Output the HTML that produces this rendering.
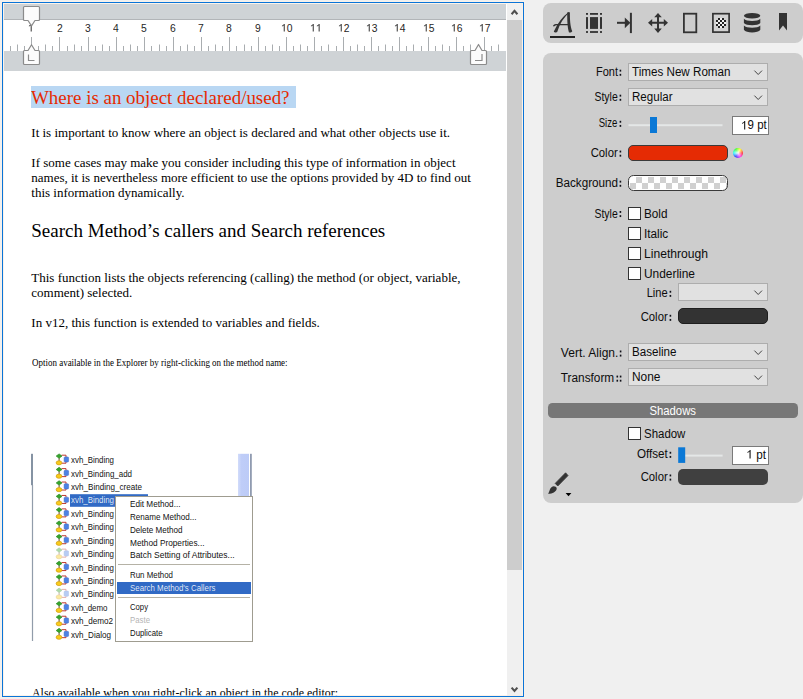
<!DOCTYPE html>
<html><head><meta charset="utf-8">
<style>
html,body{margin:0;padding:0;}
body{width:803px;height:699px;background:#f0f0f0;position:relative;overflow:hidden;font-family:"Liberation Sans",sans-serif;}
.abs{position:absolute;}
.t{position:absolute;white-space:pre;line-height:1;z-index:6;}
.combo{position:absolute;background:#e1e1e1;border:1px solid #adadad;}
#docbg{position:absolute;left:3px;top:3px;width:520px;height:693px;background:#fff;}
#docborder{position:absolute;left:2px;top:2px;width:520px;height:693px;border:1px solid #0a74d8;z-index:10;box-shadow:inset 0 0 0 1px rgba(250,235,220,0.6),0 0 0 1px #f7f1eb;}
#clip{position:absolute;left:0;top:0;width:523px;height:696px;overflow:hidden;}
</style></head><body>
<div id="docbg"></div>
<div id="clip">
<div class="abs" style="left:4px;top:4px;width:502px;height:15px;background:#cfd3d6;border-bottom:1px solid #b2b5b8;"></div>
<div class="abs" style="left:4px;top:51px;width:502px;height:19.5px;background:#cfd3d6;"></div>
<svg class="abs" style="left:0;top:0;z-index:7" width="524" height="72" viewBox="0 0 524 72"><path d="M10.5 46V51M17.5 44.5V51M24.5 46V51M31.5 37V51M38.5 46V51M45.5 44.5V51M52.5 46V51M59.5 37V51M67.5 46V51M74.5 44.5V51M81.5 46V51M88.5 37V51M95.5 46V51M102.5 44.5V51M109.5 46V51M116.5 37V51M123.5 46V51M130.5 44.5V51M137.5 46V51M144.5 37V51M151.5 46V51M159.5 44.5V51M166.5 46V51M173.5 37V51M180.5 46V51M187.5 44.5V51M194.5 46V51M201.5 37V51M208.5 46V51M215.5 44.5V51M222.5 46V51M229.5 37V51M236.5 46V51M244.5 44.5V51M251.5 46V51M258.5 37V51M265.5 46V51M272.5 44.5V51M279.5 46V51M286.5 37V51M293.5 46V51M300.5 44.5V51M307.5 46V51M314.5 37V51M321.5 46V51M328.5 44.5V51M336.5 46V51M343.5 37V51M350.5 46V51M357.5 44.5V51M364.5 46V51M371.5 37V51M378.5 46V51M385.5 44.5V51M392.5 46V51M399.5 37V51M406.5 46V51M413.5 44.5V51M421.5 46V51M428.5 37V51M435.5 46V51M442.5 44.5V51M449.5 46V51M456.5 37V51M463.5 46V51M470.5 44.5V51M477.5 46V51M484.5 37V51M491.5 46V51M498.5 44.5V51" stroke="#a9adb0" stroke-width="1" fill="none"/><path d="M24.5 6.5H38.5Q39.5 6.5 39.5 7.5V19.5Q39.5 20.5 38.5 20.5H35L31.5 25.8L28 20.5H24.5Q23.5 20.5 23.5 19.5V7.5Q23.5 6.5 24.5 6.5Z" fill="#fcfcfc" stroke="#8b8b8b" stroke-width="1.2" stroke-linejoin="round"/><path d="M24.5 50.5H28L31.5 44.7L35 50.5H38.5Q39.5 50.5 39.5 51.5V63.5Q39.5 64.5 38.5 64.5H24.5Q23.5 64.5 23.5 63.5V51.5Q23.5 50.5 24.5 50.5Z" fill="#fcfcfc" stroke="#8b8b8b" stroke-width="1.2" stroke-linejoin="round"/><path d="M28.5 54.5V60.5H34.5" fill="none" stroke="#8b8b8b" stroke-width="1.2"/><path d="M471.5 50.5H475L478.5 44.5L482 50.5H485.5Q486.5 50.5 486.5 51.5V63.5Q486.5 64.5 485.5 64.5H471.5Q470.5 64.5 470.5 63.5V51.5Q470.5 50.5 471.5 50.5Z" fill="#fcfcfc" stroke="#8b8b8b" stroke-width="1.2" stroke-linejoin="round"/><path d="M475 60.5H482V54" fill="none" stroke="#8b8b8b" stroke-width="1.2"/></svg>
<!-- scrollbar -->
<div class="abs" style="left:507px;top:4px;width:15px;height:692px;background:#f0f0f0;"></div>
<div class="abs" style="left:507px;top:20px;width:15px;height:549.5px;background:#cdcdcd;"></div>
<svg class="abs" style="left:506px;top:4px" width="17" height="692" viewBox="506 4 17 692"><path d="M511.6 14.2L514.5 10.9L517.4 14.2" fill="none" stroke="#505050" stroke-width="2.1"/><path d="M511.6 687.6L514.5 690.9L517.4 687.6" fill="none" stroke="#505050" stroke-width="2.1"/></svg>
<!-- title selection -->
<div class="abs" style="left:31px;top:86px;width:265px;height:21.5px;background:#b9d7f3;"></div>
<div class="t" style="left:31.30px;top:87.69px;font-size:19px;font-family:'Liberation Serif',serif;color:#e62a00;transform:scaleX(0.9960);transform-origin:0 0;">Where is an object declared/used?</div>
<div class="t" style="left:31.30px;top:126.11px;font-size:13px;font-family:'Liberation Serif',serif;color:#000;">It is important to know where an object is declared and what other objects use it.</div>
<div class="t" style="left:31.30px;top:156.11px;font-size:13px;font-family:'Liberation Serif',serif;color:#000;">If some cases may make you consider including this type of information in object</div>
<div class="t" style="left:31.30px;top:171.11px;font-size:13px;font-family:'Liberation Serif',serif;color:#000;">names, it is nevertheless more efficient to use the options provided by 4D to find out</div>
<div class="t" style="left:31.30px;top:186.11px;font-size:13px;font-family:'Liberation Serif',serif;color:#000;">this information dynamically.</div>
<div class="t" style="left:31.30px;top:220.79px;font-size:19px;font-family:'Liberation Serif',serif;color:#000;">Search Method’s callers and Search references</div>
<div class="t" style="left:31.30px;top:271.11px;font-size:13px;font-family:'Liberation Serif',serif;color:#000;">This function lists the objects referencing (calling) the method (or object, variable,</div>
<div class="t" style="left:31.30px;top:286.11px;font-size:13px;font-family:'Liberation Serif',serif;color:#000;">comment) selected.</div>
<div class="t" style="left:31.30px;top:316.11px;font-size:13px;font-family:'Liberation Serif',serif;color:#000;">In v12, this function is extended to variables and fields.</div>
<div class="t" style="left:31.70px;top:359.21px;font-size:9.3px;font-family:'Liberation Serif',serif;color:#000;transform:scaleX(0.9649);transform-origin:0 0;">Option available in the Explorer by right-clicking on the method name:</div>
<div class="t" style="left:31.70px;top:686.65px;font-size:12px;font-family:'Liberation Serif',serif;color:#000;transform:scaleX(0.9916);transform-origin:0 0;">Also available when you right-click an object in the code editor:</div>
<div class="t" style="left:28.18px;top:22.91px;font-size:10.5px;color:#262626;transform:scaleX(0.9850);transform-origin:50% 0;"><svg style="width:0.556em;height:0.716em;display:inline-block;vertical-align:baseline;overflow:visible" viewBox="0 0 556 716"><path fill="currentColor" d="M258 716H350V0H276C246 76 176 128 84 158V240C154 220 219 180 258 130Z"/></svg></div>
<div class="t" style="left:56.50px;top:22.91px;font-size:10.5px;color:#262626;transform:scaleX(0.9850);transform-origin:50% 0;">2</div>
<div class="t" style="left:84.82px;top:22.91px;font-size:10.5px;color:#262626;transform:scaleX(0.9850);transform-origin:50% 0;">3</div>
<div class="t" style="left:113.14px;top:22.91px;font-size:10.5px;color:#262626;transform:scaleX(0.9850);transform-origin:50% 0;">4</div>
<div class="t" style="left:141.46px;top:22.91px;font-size:10.5px;color:#262626;transform:scaleX(0.9850);transform-origin:50% 0;">5</div>
<div class="t" style="left:169.78px;top:22.91px;font-size:10.5px;color:#262626;transform:scaleX(0.9850);transform-origin:50% 0;">6</div>
<div class="t" style="left:198.10px;top:22.91px;font-size:10.5px;color:#262626;transform:scaleX(0.9850);transform-origin:50% 0;">7</div>
<div class="t" style="left:226.42px;top:22.91px;font-size:10.5px;color:#262626;transform:scaleX(0.9850);transform-origin:50% 0;">8</div>
<div class="t" style="left:254.74px;top:22.91px;font-size:10.5px;color:#262626;transform:scaleX(0.9850);transform-origin:50% 0;">9</div>
<div class="t" style="left:281.14px;top:22.91px;font-size:10.5px;color:#262626;transform:scaleX(0.9850);transform-origin:50% 0;"><svg style="width:0.556em;height:0.716em;display:inline-block;vertical-align:baseline;overflow:visible" viewBox="0 0 556 716"><path fill="currentColor" d="M258 716H350V0H276C246 76 176 128 84 158V240C154 220 219 180 258 130Z"/></svg>0</div>
<div class="t" style="left:309.85px;top:22.91px;font-size:10.5px;color:#262626;transform:scaleX(0.9850);transform-origin:50% 0;"><svg style="width:0.556em;height:0.716em;display:inline-block;vertical-align:baseline;overflow:visible" viewBox="0 0 556 716"><path fill="currentColor" d="M258 716H350V0H276C246 76 176 128 84 158V240C154 220 219 180 258 130Z"/></svg><svg style="width:0.556em;height:0.716em;display:inline-block;vertical-align:baseline;overflow:visible" viewBox="0 0 556 716"><path fill="currentColor" d="M258 716H350V0H276C246 76 176 128 84 158V240C154 220 219 180 258 130Z"/></svg></div>
<div class="t" style="left:337.78px;top:22.91px;font-size:10.5px;color:#262626;transform:scaleX(0.9850);transform-origin:50% 0;"><svg style="width:0.556em;height:0.716em;display:inline-block;vertical-align:baseline;overflow:visible" viewBox="0 0 556 716"><path fill="currentColor" d="M258 716H350V0H276C246 76 176 128 84 158V240C154 220 219 180 258 130Z"/></svg>2</div>
<div class="t" style="left:366.10px;top:22.91px;font-size:10.5px;color:#262626;transform:scaleX(0.9850);transform-origin:50% 0;"><svg style="width:0.556em;height:0.716em;display:inline-block;vertical-align:baseline;overflow:visible" viewBox="0 0 556 716"><path fill="currentColor" d="M258 716H350V0H276C246 76 176 128 84 158V240C154 220 219 180 258 130Z"/></svg>3</div>
<div class="t" style="left:394.42px;top:22.91px;font-size:10.5px;color:#262626;transform:scaleX(0.9850);transform-origin:50% 0;"><svg style="width:0.556em;height:0.716em;display:inline-block;vertical-align:baseline;overflow:visible" viewBox="0 0 556 716"><path fill="currentColor" d="M258 716H350V0H276C246 76 176 128 84 158V240C154 220 219 180 258 130Z"/></svg>4</div>
<div class="t" style="left:422.74px;top:22.91px;font-size:10.5px;color:#262626;transform:scaleX(0.9850);transform-origin:50% 0;"><svg style="width:0.556em;height:0.716em;display:inline-block;vertical-align:baseline;overflow:visible" viewBox="0 0 556 716"><path fill="currentColor" d="M258 716H350V0H276C246 76 176 128 84 158V240C154 220 219 180 258 130Z"/></svg>5</div>
<div class="t" style="left:451.06px;top:22.91px;font-size:10.5px;color:#262626;transform:scaleX(0.9850);transform-origin:50% 0;"><svg style="width:0.556em;height:0.716em;display:inline-block;vertical-align:baseline;overflow:visible" viewBox="0 0 556 716"><path fill="currentColor" d="M258 716H350V0H276C246 76 176 128 84 158V240C154 220 219 180 258 130Z"/></svg>6</div>
<div class="t" style="left:479.38px;top:22.91px;font-size:10.5px;color:#262626;transform:scaleX(0.9850);transform-origin:50% 0;"><svg style="width:0.556em;height:0.716em;display:inline-block;vertical-align:baseline;overflow:visible" viewBox="0 0 556 716"><path fill="currentColor" d="M258 716H350V0H276C246 76 176 128 84 158V240C154 220 219 180 258 130Z"/></svg>7</div>
</div>
<div id="docborder"></div>
<div class="abs" style="left:543px;top:3px;width:260px;height:40px;background:#cdcdcd;border-radius:8px;"></div>
<div class="abs" style="left:543px;top:53px;width:260px;height:449.6px;background:#cdcdcd;border-radius:8px;"></div>
<svg class="abs" style="left:0;top:0" width="803" height="50" viewBox="0 0 803 50"><path d="M568.5 12.3Q559.8 18.6 553.8 31.4C554.3 32.6 556.4 32.8 557.2 32Q560.9 19.8 569.4 12.6Z" fill="#333"/><path d="M567.2 12.6C568 12.2 569.2 12.2 569.9 12.4C569.8 19 570.2 26.5 572.3 31.2C571.6 32.3 570 32.7 568.9 32.2C567.3 27 567.2 19 567.2 12.6Z" fill="#333"/><path d="M553 25.6C553.6 24.3 555.2 23.9 557.5 23.9H568.6V25.3H557.8C556 25.3 554.8 25.6 553.9 26.7Z" fill="#333"/><rect x="550" y="36" width="25" height="2" fill="#222"/><rect x="590" y="17.1" width="8" height="11.8" fill="#333"/><rect x="586" y="13" width="2" height="1.8" fill="#333"/><rect x="590" y="13" width="8" height="1.8" fill="#333"/><rect x="600" y="13" width="2" height="1.8" fill="#333"/><rect x="586" y="17.1" width="2" height="11.8" fill="#333"/><rect x="600" y="17.1" width="2" height="11.8" fill="#333"/><rect x="586" y="31.1" width="2" height="1.8" fill="#333"/><rect x="590" y="31.1" width="8" height="1.8" fill="#333"/><rect x="600" y="31.1" width="2" height="1.8" fill="#333"/><rect x="617" y="21.8" width="10" height="2" fill="#333"/><path d="M624.8 17.4L630.4 22.8L624.8 28.2Z" fill="#333"/><rect x="629.9" y="12.8" width="2" height="20.3" fill="#333"/><path d="M658 13L661.8 17.2H659V21.8H663.8V19L668 22.8L663.8 26.6V23.8H659V28.6H661.8L658 33L654.2 28.6H657V23.8H652.2V26.6L648 22.8L652.2 19V21.8H657V17.2H654.2Z" fill="#333"/><rect x="683.9" y="13.7" width="12.4" height="18.6" fill="none" stroke="#333" stroke-width="1.8"/><rect x="712.9" y="13.7" width="16.2" height="18.4" fill="#d2d2d2" stroke="#333" stroke-width="1.7"/><path d="M720 18h2v2h-2zM718 20h2v2h-2zM722 20h2v2h-2zM716 22h2v2h-2zM720 22h2v2h-2zM724 22h2v2h-2zM718 24h2v2h-2zM722 24h2v2h-2zM720 26h2v2h-2z" fill="#f2f2f2"/><path d="M718 18h2v2h-2zM722 18h2v2h-2zM716 20h2v2h-2zM720 20h2v2h-2zM724 20h2v2h-2zM718 22h2v2h-2zM722 22h2v2h-2zM716 24h2v2h-2zM720 24h2v2h-2zM724 24h2v2h-2zM718 26h2v2h-2zM722 26h2v2h-2z" fill="#222"/><ellipse cx="752.1" cy="15.8" rx="8.2" ry="2.8" fill="#333"/><path d="M743.9 18.7C746 21.7 758.2 21.7 760.3 18.7V22.9C758.2 25.9 746 25.9 743.9 22.9Z" fill="#333"/><path d="M743.9 25.5C746 28.5 758.2 28.5 760.3 25.5V29.7C758.2 33.4 746 33.4 743.9 29.7Z" fill="#333"/><path d="M779 13H787V30.4L783 25.6L779 30.4Z" fill="#333"/></svg>
<div class="combo" style="left:628px;top:63px;width:138px;height:16px"></div>
<div class="combo" style="left:628px;top:88px;width:138px;height:16px"></div>
<div class="combo" style="left:678px;top:283px;width:88px;height:16px"></div>
<div class="combo" style="left:628px;top:343px;width:138px;height:16px"></div>
<div class="combo" style="left:628px;top:368px;width:138px;height:16px"></div>
<svg class="abs" style="left:0;top:0;z-index:4" width="803" height="699" viewBox="0 0 803 699"><path d="M754.4000000000001 70.6L758.2 74.5L762.0 70.6" fill="none" stroke="#444" stroke-width="1"/><path d="M754.4000000000001 95.6L758.2 99.5L762.0 95.6" fill="none" stroke="#444" stroke-width="1"/><path d="M754.4000000000001 290.6L758.2 294.5L762.0 290.6" fill="none" stroke="#444" stroke-width="1"/><path d="M754.4000000000001 350.6L758.2 354.5L762.0 350.6" fill="none" stroke="#444" stroke-width="1"/><path d="M754.4000000000001 375.6L758.2 379.5L762.0 375.6" fill="none" stroke="#444" stroke-width="1"/><rect x="628.5" y="124.2" width="94" height="2" fill="#e4e7e7"/><rect x="650" y="117" width="7" height="16" fill="#0a78d6"/><rect x="685" y="454.6" width="37.6" height="2" fill="#e4e7e7"/><rect x="678.2" y="447.3" width="7" height="15.6" fill="#0a78d6"/><rect x="619.60" y="69.70" width="1.6" height="1.9" fill="#101018"/><rect x="619.60" y="73.85" width="1.6" height="1.9" fill="#101018"/><rect x="619.60" y="94.70" width="1.6" height="1.9" fill="#101018"/><rect x="619.60" y="98.85" width="1.6" height="1.9" fill="#101018"/><rect x="619.60" y="120.80" width="1.6" height="1.9" fill="#101018"/><rect x="619.60" y="124.95" width="1.6" height="1.9" fill="#101018"/><rect x="619.60" y="150.60" width="1.6" height="1.9" fill="#101018"/><rect x="619.60" y="154.75" width="1.6" height="1.9" fill="#101018"/><rect x="619.60" y="180.70" width="1.6" height="1.9" fill="#101018"/><rect x="619.60" y="184.85" width="1.6" height="1.9" fill="#101018"/><rect x="619.60" y="211.00" width="1.6" height="1.9" fill="#101018"/><rect x="619.60" y="215.15" width="1.6" height="1.9" fill="#101018"/><rect x="669.60" y="290.80" width="1.6" height="1.9" fill="#101018"/><rect x="669.60" y="294.95" width="1.6" height="1.9" fill="#101018"/><rect x="669.60" y="314.80" width="1.6" height="1.9" fill="#101018"/><rect x="669.60" y="318.95" width="1.6" height="1.9" fill="#101018"/><rect x="619.80" y="350.50" width="1.6" height="1.9" fill="#101018"/><rect x="619.80" y="354.65" width="1.6" height="1.9" fill="#101018"/><rect x="619.80" y="375.60" width="1.6" height="1.9" fill="#101018"/><rect x="619.80" y="379.75" width="1.6" height="1.9" fill="#101018"/><rect x="616.50" y="375.60" width="1.6" height="1.9" fill="#101018"/><rect x="616.50" y="379.75" width="1.6" height="1.9" fill="#101018"/><rect x="669.60" y="451.80" width="1.6" height="1.9" fill="#101018"/><rect x="669.60" y="455.95" width="1.6" height="1.9" fill="#101018"/><rect x="669.60" y="474.50" width="1.6" height="1.9" fill="#101018"/><rect x="669.60" y="478.65" width="1.6" height="1.9" fill="#101018"/><path d="M565.6 472.8L568 475.6L557.8 486L555.2 483.4Z" fill="#333" stroke="#333" stroke-width="0.8" stroke-linejoin="round"/><path d="M548 493.8C548.9 492.8 549.2 491.2 549.8 489.7C550.6 487.6 552.2 486.3 553.8 486.3C555.2 486.3 556.4 487 556.7 488.2C557 489.6 555.6 491.4 553.8 492.4C552.4 493.2 550.6 493.8 548 493.8Z" fill="#333"/><path d="M565.6 493H571.4L568.5 496.2Z" fill="#000"/></svg>
<div class="abs" style="left:732px;top:116px;width:35px;height:17px;background:#fff;border:1px solid #7a7a7a;"></div>
<div class="abs" style="left:732px;top:446px;width:35px;height:17px;background:#fff;border:1px solid #7a7a7a;"></div>
<div class="abs" style="left:628px;top:145px;width:98px;height:14px;background:#e52b04;border:1px solid #3a3a3a;border-radius:5px;"></div>
<div class="abs" style="left:732.7px;top:147.7px;width:10.4px;height:10.4px;border-radius:50%;background:radial-gradient(circle,rgba(255,255,255,0.95) 0%,rgba(255,255,255,0.5) 35%,rgba(255,255,255,0) 75%),conic-gradient(from 90deg,#ff2020,#ff20ff,#2020ff,#20ffff,#20ff20,#ffff20,#ff2020);"></div>
<svg class="abs" style="left:628px;top:175px" width="100" height="16" viewBox="628 175 100 16"><defs><clipPath id="ck"><rect x="628.5" y="175.5" width="99" height="15" rx="5"/></clipPath></defs><rect x="628.5" y="175.5" width="99" height="15" rx="5" fill="#fff"/><g clip-path="url(#ck)"><rect x="636" y="177" width="6" height="6" fill="#d0d0d0"/><rect x="648" y="177" width="6" height="6" fill="#d0d0d0"/><rect x="660" y="177" width="6" height="6" fill="#d0d0d0"/><rect x="672" y="177" width="6" height="6" fill="#d0d0d0"/><rect x="684" y="177" width="6" height="6" fill="#d0d0d0"/><rect x="696" y="177" width="6" height="6" fill="#d0d0d0"/><rect x="708" y="177" width="6" height="6" fill="#d0d0d0"/><rect x="720" y="177" width="6" height="6" fill="#d0d0d0"/><rect x="630" y="183" width="6" height="6" fill="#d0d0d0"/><rect x="642" y="183" width="6" height="6" fill="#d0d0d0"/><rect x="654" y="183" width="6" height="6" fill="#d0d0d0"/><rect x="666" y="183" width="6" height="6" fill="#d0d0d0"/><rect x="678" y="183" width="6" height="6" fill="#d0d0d0"/><rect x="690" y="183" width="6" height="6" fill="#d0d0d0"/><rect x="702" y="183" width="6" height="6" fill="#d0d0d0"/><rect x="714" y="183" width="6" height="6" fill="#d0d0d0"/><rect x="726" y="183" width="6" height="6" fill="#d0d0d0"/></g><rect x="628.5" y="175.5" width="99" height="15" rx="5" fill="none" stroke="#3a3a3a" stroke-width="1"/></svg>
<div class="abs" style="left:678px;top:308px;width:88px;height:14px;background:#333;border:1px solid #1e1e1e;border-radius:5px;"></div>
<div class="abs" style="left:678px;top:469px;width:90px;height:16px;background:#404040;border-radius:5px;"></div>
<div class="abs" style="left:628px;top:207px;width:11px;height:11px;background:#fff;border:1px solid #333;"></div>
<div class="abs" style="left:628px;top:227px;width:11px;height:11px;background:#fff;border:1px solid #333;"></div>
<div class="abs" style="left:628px;top:247px;width:11px;height:11px;background:#fff;border:1px solid #333;"></div>
<div class="abs" style="left:628px;top:267px;width:11px;height:11px;background:#fff;border:1px solid #333;"></div>
<div class="abs" style="left:628px;top:427px;width:11px;height:11px;background:#fff;border:1px solid #333;"></div>
<div class="abs" style="left:548px;top:403px;width:250px;height:15px;background:#777;border-radius:4.5px;"></div>
<div class="t" style="left:593.68px;top:66.24px;font-size:12px;color:#0c0c0c;transform:scaleX(0.9161);transform-origin:100% 0;">Font</div>
<div class="t" style="left:591.01px;top:91.24px;font-size:12px;color:#0c0c0c;transform:scaleX(0.8693);transform-origin:100% 0;">Style</div>
<div class="t" style="left:594.36px;top:117.34px;font-size:12px;color:#0c0c0c;transform:scaleX(0.7968);transform-origin:100% 0;">Size</div>
<div class="t" style="left:589.01px;top:147.14px;font-size:12px;color:#0c0c0c;transform:scaleX(0.9412);transform-origin:100% 0;">Color</div>
<div class="t" style="left:553.65px;top:177.24px;font-size:12px;color:#0c0c0c;transform:scaleX(0.9743);transform-origin:100% 0;">Background</div>
<div class="t" style="left:591.01px;top:207.54px;font-size:12px;color:#0c0c0c;transform:scaleX(0.8693);transform-origin:100% 0;">Style</div>
<div class="t" style="left:632.20px;top:66.24px;font-size:12px;color:#0c0c0c;transform:scaleX(0.9697);transform-origin:0 0;">Times New Roman</div>
<div class="t" style="left:632.20px;top:91.24px;font-size:12px;color:#0c0c0c;transform:scaleX(0.9636);transform-origin:0 0;">Regular</div>
<div class="t" style="left:739.70px;top:119.34px;font-size:12px;color:#0c0c0c;transform:scaleX(0.9549);transform-origin:100% 0;"><svg style="width:0.556em;height:0.716em;display:inline-block;vertical-align:baseline;overflow:visible" viewBox="0 0 556 716"><path fill="currentColor" d="M258 716H350V0H276C246 76 176 128 84 158V240C154 220 219 180 258 130Z"/></svg>9 pt</div>
<div class="t" style="left:644.40px;top:208.24px;font-size:12px;color:#0c0c0c;transform:scaleX(0.9779);transform-origin:0 0;">Bold</div>
<div class="t" style="left:644.40px;top:228.24px;font-size:12px;color:#0c0c0c;transform:scaleX(0.9803);transform-origin:0 0;">Italic</div>
<div class="t" style="left:644.40px;top:248.24px;font-size:12px;color:#0c0c0c;transform:scaleX(1.0096);transform-origin:0 0;">Linethrough</div>
<div class="t" style="left:644.40px;top:268.24px;font-size:12px;color:#0c0c0c;transform:scaleX(0.9927);transform-origin:0 0;">Underline</div>
<div class="t" style="left:645.01px;top:287.34px;font-size:12px;color:#0c0c0c;transform:scaleX(0.9256);transform-origin:100% 0;">Line</div>
<div class="t" style="left:639.01px;top:311.34px;font-size:12px;color:#0c0c0c;transform:scaleX(0.9412);transform-origin:100% 0;">Color</div>
<div class="t" style="left:560.52px;top:347.04px;font-size:12px;color:#0c0c0c;transform:scaleX(1.0022);transform-origin:100% 0;">Vert. Align.</div>
<div class="t" style="left:560.37px;top:372.14px;font-size:12px;color:#0c0c0c;transform:scaleX(0.9865);transform-origin:100% 0;">Transform</div>
<div class="t" style="left:632.20px;top:346.24px;font-size:12px;color:#0c0c0c;transform:scaleX(0.9667);transform-origin:0 0;">Baseline</div>
<div class="t" style="left:632.20px;top:371.24px;font-size:12px;color:#0c0c0c;transform:scaleX(0.9935);transform-origin:0 0;">None</div>
<div class="t" style="left:648.31px;top:405.24px;font-size:12px;color:#fff;transform:scaleX(0.9438);transform-origin:50% 0;">Shadows</div>
<div class="t" style="left:644.40px;top:428.24px;font-size:12px;color:#0c0c0c;transform:scaleX(0.9545);transform-origin:0 0;">Shadow</div>
<div class="t" style="left:635.90px;top:448.34px;font-size:12px;color:#0c0c0c;transform:scaleX(0.9686);transform-origin:100% 0;">Offset</div>
<div class="t" style="left:746.48px;top:448.54px;font-size:12px;color:#0c0c0c;transform:scaleX(0.9742);transform-origin:100% 0;"><svg style="width:0.556em;height:0.716em;display:inline-block;vertical-align:baseline;overflow:visible" viewBox="0 0 556 716"><path fill="currentColor" d="M258 716H350V0H276C246 76 176 128 84 158V240C154 220 219 180 258 130Z"/></svg> pt</div>
<div class="t" style="left:639.01px;top:471.04px;font-size:12px;color:#0c0c0c;transform:scaleX(0.9412);transform-origin:100% 0;">Color</div>
<div id="pic" class="abs" style="left:28px;top:450px;width:228px;height:195px;overflow:hidden;z-index:20;"><div class="abs" style="left:-28px;top:-450px;width:523px;height:699px;">
<svg class="abs" style="left:0;top:0;z-index:1" width="524" height="699" viewBox="0 0 524 699"><rect x="31" y="453.8" width="2" height="31.4" fill="#8593a3"/><rect x="31.9" y="485" width="1.2" height="156" fill="#919caa"/><defs><linearGradient id="sg" x1="0" x2="1" y1="0" y2="0"><stop offset="0" stop-color="#d2dcfa"/><stop offset="0.3" stop-color="#bfcdf8"/><stop offset="1" stop-color="#bccbf7"/></linearGradient></defs><rect x="238" y="453.8" width="11" height="43" fill="url(#sg)"/><rect x="250" y="453.8" width="1.8" height="43" fill="#909bb0"/><rect x="70" y="494.2" width="78" height="12.6" fill="#316ac5"/><g opacity="1"><path d="M61.6 455.20H66V457.10M61.6 463.20H66V461.90" stroke="#c03a30" stroke-width="1" fill="none"/><path d="M59.1 457.90V460.90" stroke="#6b4a20" stroke-width="1" fill="none"/><path d="M59.1 453.90L62 456.10L59.1 458.20L56.2 456.10Z" fill="#35a52c" stroke="#2a8a22" stroke-width="0.7" stroke-linejoin="round"/><ellipse cx="59" cy="462.80" rx="2.9" ry="2.1" fill="#f8cb1a" stroke="#c9920c" stroke-width="0.6"/><rect x="64.1" y="456.90" width="4.5" height="5.2" rx="1" fill="#4d82e4" stroke="#3b68c4" stroke-width="0.5"/></g><g opacity="1"><path d="M61.6 468.62H66V470.52M61.6 476.62H66V475.32" stroke="#c03a30" stroke-width="1" fill="none"/><path d="M59.1 471.32V474.32" stroke="#6b4a20" stroke-width="1" fill="none"/><path d="M59.1 467.32L62 469.52L59.1 471.62L56.2 469.52Z" fill="#35a52c" stroke="#2a8a22" stroke-width="0.7" stroke-linejoin="round"/><ellipse cx="59" cy="476.22" rx="2.9" ry="2.1" fill="#f8cb1a" stroke="#c9920c" stroke-width="0.6"/><rect x="64.1" y="470.32" width="4.5" height="5.2" rx="1" fill="#4d82e4" stroke="#3b68c4" stroke-width="0.5"/></g><g opacity="1"><path d="M61.6 482.04H66V483.94M61.6 490.04H66V488.74" stroke="#c03a30" stroke-width="1" fill="none"/><path d="M59.1 484.74V487.74" stroke="#6b4a20" stroke-width="1" fill="none"/><path d="M59.1 480.74L62 482.94L59.1 485.04L56.2 482.94Z" fill="#35a52c" stroke="#2a8a22" stroke-width="0.7" stroke-linejoin="round"/><ellipse cx="59" cy="489.64" rx="2.9" ry="2.1" fill="#f8cb1a" stroke="#c9920c" stroke-width="0.6"/><rect x="64.1" y="483.74" width="4.5" height="5.2" rx="1" fill="#4d82e4" stroke="#3b68c4" stroke-width="0.5"/></g><g opacity="1"><path d="M61.6 495.46H66V497.36M61.6 503.46H66V502.16" stroke="#c03a30" stroke-width="1" fill="none"/><path d="M59.1 498.16V501.16" stroke="#6b4a20" stroke-width="1" fill="none"/><path d="M59.1 494.16L62 496.36L59.1 498.46L56.2 496.36Z" fill="#35a52c" stroke="#2a8a22" stroke-width="0.7" stroke-linejoin="round"/><ellipse cx="59" cy="503.06" rx="2.9" ry="2.1" fill="#f8cb1a" stroke="#c9920c" stroke-width="0.6"/><rect x="64.1" y="497.16" width="4.5" height="5.2" rx="1" fill="#4d82e4" stroke="#3b68c4" stroke-width="0.5"/></g><g opacity="1"><path d="M61.6 508.88H66V510.78M61.6 516.88H66V515.58" stroke="#c03a30" stroke-width="1" fill="none"/><path d="M59.1 511.58V514.58" stroke="#6b4a20" stroke-width="1" fill="none"/><path d="M59.1 507.58L62 509.78L59.1 511.88L56.2 509.78Z" fill="#35a52c" stroke="#2a8a22" stroke-width="0.7" stroke-linejoin="round"/><ellipse cx="59" cy="516.48" rx="2.9" ry="2.1" fill="#f8cb1a" stroke="#c9920c" stroke-width="0.6"/><rect x="64.1" y="510.58" width="4.5" height="5.2" rx="1" fill="#4d82e4" stroke="#3b68c4" stroke-width="0.5"/></g><g opacity="1"><path d="M61.6 522.30H66V524.20M61.6 530.30H66V529.00" stroke="#c03a30" stroke-width="1" fill="none"/><path d="M59.1 525.00V528.00" stroke="#6b4a20" stroke-width="1" fill="none"/><path d="M59.1 521.00L62 523.20L59.1 525.30L56.2 523.20Z" fill="#35a52c" stroke="#2a8a22" stroke-width="0.7" stroke-linejoin="round"/><ellipse cx="59" cy="529.90" rx="2.9" ry="2.1" fill="#f8cb1a" stroke="#c9920c" stroke-width="0.6"/><rect x="64.1" y="524.00" width="4.5" height="5.2" rx="1" fill="#4d82e4" stroke="#3b68c4" stroke-width="0.5"/></g><g opacity="1"><path d="M61.6 535.72H66V537.62M61.6 543.72H66V542.42" stroke="#c03a30" stroke-width="1" fill="none"/><path d="M59.1 538.42V541.42" stroke="#6b4a20" stroke-width="1" fill="none"/><path d="M59.1 534.42L62 536.62L59.1 538.72L56.2 536.62Z" fill="#35a52c" stroke="#2a8a22" stroke-width="0.7" stroke-linejoin="round"/><ellipse cx="59" cy="543.32" rx="2.9" ry="2.1" fill="#f8cb1a" stroke="#c9920c" stroke-width="0.6"/><rect x="64.1" y="537.42" width="4.5" height="5.2" rx="1" fill="#4d82e4" stroke="#3b68c4" stroke-width="0.5"/></g><g opacity="0.4"><path d="M61.6 549.14H66V551.04M61.6 557.14H66V555.84" stroke="#c03a30" stroke-width="1" fill="none"/><path d="M59.1 551.84V554.84" stroke="#6b4a20" stroke-width="1" fill="none"/><path d="M59.1 547.84L62 550.04L59.1 552.14L56.2 550.04Z" fill="#35a52c" stroke="#2a8a22" stroke-width="0.7" stroke-linejoin="round"/><ellipse cx="59" cy="556.74" rx="2.9" ry="2.1" fill="#f8cb1a" stroke="#c9920c" stroke-width="0.6"/><rect x="64.1" y="550.84" width="4.5" height="5.2" rx="1" fill="#4d82e4" stroke="#3b68c4" stroke-width="0.5"/></g><g opacity="1"><path d="M61.6 562.56H66V564.46M61.6 570.56H66V569.26" stroke="#c03a30" stroke-width="1" fill="none"/><path d="M59.1 565.26V568.26" stroke="#6b4a20" stroke-width="1" fill="none"/><path d="M59.1 561.26L62 563.46L59.1 565.56L56.2 563.46Z" fill="#35a52c" stroke="#2a8a22" stroke-width="0.7" stroke-linejoin="round"/><ellipse cx="59" cy="570.16" rx="2.9" ry="2.1" fill="#f8cb1a" stroke="#c9920c" stroke-width="0.6"/><rect x="64.1" y="564.26" width="4.5" height="5.2" rx="1" fill="#4d82e4" stroke="#3b68c4" stroke-width="0.5"/></g><g opacity="1"><path d="M61.6 575.98H66V577.88M61.6 583.98H66V582.68" stroke="#c03a30" stroke-width="1" fill="none"/><path d="M59.1 578.68V581.68" stroke="#6b4a20" stroke-width="1" fill="none"/><path d="M59.1 574.68L62 576.88L59.1 578.98L56.2 576.88Z" fill="#35a52c" stroke="#2a8a22" stroke-width="0.7" stroke-linejoin="round"/><ellipse cx="59" cy="583.58" rx="2.9" ry="2.1" fill="#f8cb1a" stroke="#c9920c" stroke-width="0.6"/><rect x="64.1" y="577.68" width="4.5" height="5.2" rx="1" fill="#4d82e4" stroke="#3b68c4" stroke-width="0.5"/></g><g opacity="0.4"><path d="M61.6 589.40H66V591.30M61.6 597.40H66V596.10" stroke="#c03a30" stroke-width="1" fill="none"/><path d="M59.1 592.10V595.10" stroke="#6b4a20" stroke-width="1" fill="none"/><path d="M59.1 588.10L62 590.30L59.1 592.40L56.2 590.30Z" fill="#35a52c" stroke="#2a8a22" stroke-width="0.7" stroke-linejoin="round"/><ellipse cx="59" cy="597.00" rx="2.9" ry="2.1" fill="#f8cb1a" stroke="#c9920c" stroke-width="0.6"/><rect x="64.1" y="591.10" width="4.5" height="5.2" rx="1" fill="#4d82e4" stroke="#3b68c4" stroke-width="0.5"/></g><g opacity="1"><path d="M61.6 602.82H66V604.72M61.6 610.82H66V609.52" stroke="#c03a30" stroke-width="1" fill="none"/><path d="M59.1 605.52V608.52" stroke="#6b4a20" stroke-width="1" fill="none"/><path d="M59.1 601.52L62 603.72L59.1 605.82L56.2 603.72Z" fill="#35a52c" stroke="#2a8a22" stroke-width="0.7" stroke-linejoin="round"/><ellipse cx="59" cy="610.42" rx="2.9" ry="2.1" fill="#f8cb1a" stroke="#c9920c" stroke-width="0.6"/><rect x="64.1" y="604.52" width="4.5" height="5.2" rx="1" fill="#4d82e4" stroke="#3b68c4" stroke-width="0.5"/></g><g opacity="1"><path d="M61.6 616.24H66V618.14M61.6 624.24H66V622.94" stroke="#c03a30" stroke-width="1" fill="none"/><path d="M59.1 618.94V621.94" stroke="#6b4a20" stroke-width="1" fill="none"/><path d="M59.1 614.94L62 617.14L59.1 619.24L56.2 617.14Z" fill="#35a52c" stroke="#2a8a22" stroke-width="0.7" stroke-linejoin="round"/><ellipse cx="59" cy="623.84" rx="2.9" ry="2.1" fill="#f8cb1a" stroke="#c9920c" stroke-width="0.6"/><rect x="64.1" y="617.94" width="4.5" height="5.2" rx="1" fill="#4d82e4" stroke="#3b68c4" stroke-width="0.5"/></g><g opacity="1"><path d="M61.6 629.66H66V631.56M61.6 637.66H66V636.36" stroke="#c03a30" stroke-width="1" fill="none"/><path d="M59.1 632.36V635.36" stroke="#6b4a20" stroke-width="1" fill="none"/><path d="M59.1 628.36L62 630.56L59.1 632.66L56.2 630.56Z" fill="#35a52c" stroke="#2a8a22" stroke-width="0.7" stroke-linejoin="round"/><ellipse cx="59" cy="637.26" rx="2.9" ry="2.1" fill="#f8cb1a" stroke="#c9920c" stroke-width="0.6"/><rect x="64.1" y="631.36" width="4.5" height="5.2" rx="1" fill="#4d82e4" stroke="#3b68c4" stroke-width="0.5"/></g></svg>
<div class="abs" style="left:115.2px;top:496px;width:136px;height:144px;background:#fff;border:1px solid #9f9c90;z-index:3;"></div>
<div class="abs" style="left:118px;top:563.6px;width:132px;height:1px;background:#b5b2a6;z-index:4"></div>
<div class="abs" style="left:118px;top:596.6px;width:132px;height:1px;background:#b5b2a6;z-index:4"></div>
<div class="abs" style="left:117.4px;top:581.6px;width:133.4px;height:12.4px;background:#316ac5;z-index:4"></div>
<div class="t" style="left:71.20px;top:456.23px;font-size:9.3px;color:transparent;transform:scaleX(0.8489);transform-origin:0 0;z-index:2;text-shadow:0 0 0.5px #000;opacity:0.9;">xvh_Binding</div>
<div class="t" style="left:71.20px;top:469.65px;font-size:9.3px;color:transparent;transform:scaleX(0.8550);transform-origin:0 0;z-index:2;text-shadow:0 0 0.5px #000;opacity:0.9;">xvh_Binding_add</div>
<div class="t" style="left:71.20px;top:483.07px;font-size:9.3px;color:transparent;transform:scaleX(0.8693);transform-origin:0 0;z-index:2;text-shadow:0 0 0.5px #000;opacity:0.9;">xvh_Binding_create</div>
<div class="t" style="left:71.20px;top:496.49px;font-size:9.3px;color:transparent;transform:scaleX(0.8489);transform-origin:0 0;z-index:2;text-shadow:0 0 0.5px #fff;opacity:0.9;">xvh_Binding</div>
<div class="t" style="left:71.20px;top:509.91px;font-size:9.3px;color:transparent;transform:scaleX(0.8489);transform-origin:0 0;z-index:2;text-shadow:0 0 0.5px #000;opacity:0.9;">xvh_Binding</div>
<div class="t" style="left:71.20px;top:523.33px;font-size:9.3px;color:transparent;transform:scaleX(0.8489);transform-origin:0 0;z-index:2;text-shadow:0 0 0.5px #000;opacity:0.9;">xvh_Binding</div>
<div class="t" style="left:71.20px;top:536.75px;font-size:9.3px;color:transparent;transform:scaleX(0.8489);transform-origin:0 0;z-index:2;text-shadow:0 0 0.5px #000;opacity:0.9;">xvh_Binding</div>
<div class="t" style="left:71.20px;top:550.17px;font-size:9.3px;color:transparent;transform:scaleX(0.8489);transform-origin:0 0;z-index:2;text-shadow:0 0 0.5px #000;opacity:0.9;">xvh_Binding</div>
<div class="t" style="left:71.20px;top:563.59px;font-size:9.3px;color:transparent;transform:scaleX(0.8489);transform-origin:0 0;z-index:2;text-shadow:0 0 0.5px #000;opacity:0.9;">xvh_Binding</div>
<div class="t" style="left:71.20px;top:577.01px;font-size:9.3px;color:transparent;transform:scaleX(0.8489);transform-origin:0 0;z-index:2;text-shadow:0 0 0.5px #000;opacity:0.9;">xvh_Binding</div>
<div class="t" style="left:71.20px;top:590.43px;font-size:9.3px;color:transparent;transform:scaleX(0.8489);transform-origin:0 0;z-index:2;text-shadow:0 0 0.5px #000;opacity:0.9;">xvh_Binding</div>
<div class="t" style="left:71.20px;top:603.85px;font-size:9.3px;color:transparent;transform:scaleX(0.8507);transform-origin:0 0;z-index:2;text-shadow:0 0 0.5px #000;opacity:0.9;">xvh_demo</div>
<div class="t" style="left:71.20px;top:617.27px;font-size:9.3px;color:transparent;transform:scaleX(0.8736);transform-origin:0 0;z-index:2;text-shadow:0 0 0.5px #000;opacity:0.9;">xvh_demo2</div>
<div class="t" style="left:71.20px;top:630.69px;font-size:9.3px;color:transparent;transform:scaleX(0.8696);transform-origin:0 0;z-index:2;text-shadow:0 0 0.5px #000;opacity:0.9;">xvh_Dialog</div>
<div class="t" style="left:129.60px;top:500.33px;font-size:9.3px;color:transparent;transform:scaleX(0.8802);transform-origin:0 0;z-index:5;text-shadow:0 0 0.5px #000;opacity:0.9;">Edit Method...</div>
<div class="t" style="left:129.60px;top:513.03px;font-size:9.3px;color:transparent;transform:scaleX(0.8695);transform-origin:0 0;z-index:5;text-shadow:0 0 0.5px #000;opacity:0.9;">Rename Method...</div>
<div class="t" style="left:129.60px;top:525.93px;font-size:9.3px;color:transparent;transform:scaleX(0.8682);transform-origin:0 0;z-index:5;text-shadow:0 0 0.5px #000;opacity:0.9;">Delete Method</div>
<div class="t" style="left:129.60px;top:538.83px;font-size:9.3px;color:transparent;transform:scaleX(0.8899);transform-origin:0 0;z-index:5;text-shadow:0 0 0.5px #000;opacity:0.9;">Method Properties...</div>
<div class="t" style="left:129.60px;top:551.43px;font-size:9.3px;color:transparent;transform:scaleX(0.9117);transform-origin:0 0;z-index:5;text-shadow:0 0 0.5px #000;opacity:0.9;">Batch Setting of Attributes...</div>
<div class="t" style="left:129.60px;top:570.63px;font-size:9.3px;color:transparent;transform:scaleX(0.8489);transform-origin:0 0;z-index:5;text-shadow:0 0 0.5px #000;opacity:0.9;">Run Method</div>
<div class="t" style="left:129.60px;top:583.73px;font-size:9.3px;color:transparent;transform:scaleX(0.8465);transform-origin:0 0;z-index:5;text-shadow:0 0 0.5px #fff;opacity:0.9;">Search Method's Callers</div>
<div class="t" style="left:129.60px;top:603.23px;font-size:9.3px;color:transparent;transform:scaleX(0.8288);transform-origin:0 0;z-index:5;text-shadow:0 0 0.5px #000;opacity:0.9;">Copy</div>
<div class="t" style="left:129.60px;top:615.93px;font-size:9.3px;color:transparent;transform:scaleX(0.8410);transform-origin:0 0;z-index:5;text-shadow:0 0 0.5px #aaa;opacity:0.9;">Paste</div>
<div class="t" style="left:129.60px;top:628.73px;font-size:9.3px;color:transparent;transform:scaleX(0.8384);transform-origin:0 0;z-index:5;text-shadow:0 0 0.5px #000;opacity:0.9;">Duplicate</div>
</div></div>
</body></html>
